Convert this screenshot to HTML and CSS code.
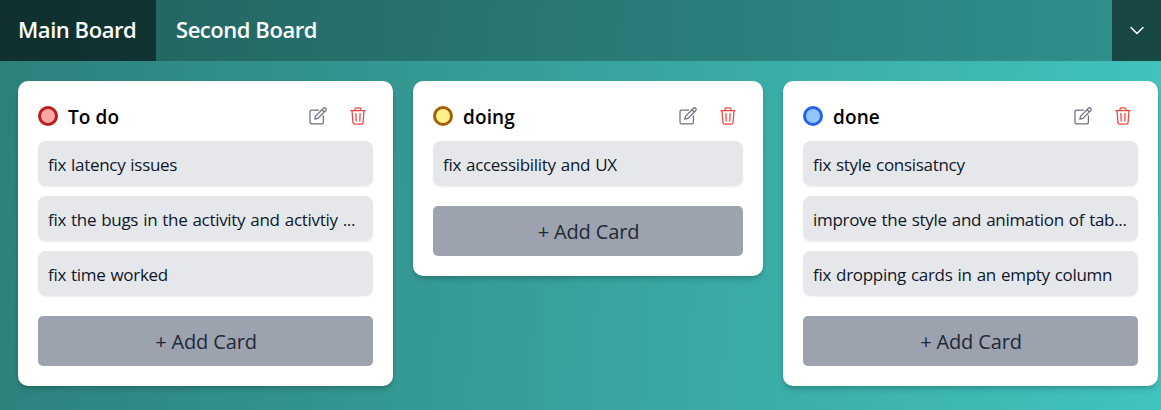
FILE: index.html
```html
<!DOCTYPE html>
<html lang="en">
<head>
<meta charset="utf-8">
<title>Boards</title>
<link rel="stylesheet" href="styles.css">
</head>
<body>
<svg class="defs" aria-hidden="true">
  <symbol id="edit" viewBox="0 0 20 20">
    <path d="M10.500 4H3.600Q2 4 2 5.600V16.200Q2 17.800 3.600 17.800H13.800Q15.400 17.800 15.400 16.200V9.800"/>
    <path d="M6.800 13.200L7.600 10.100L15.500 2.200Q16.600 1.200 17.700 2.300Q18.800 3.400 17.800 4.500L9.900 12.400Z M14 3.700L16.300 6"/>
  </symbol>
  <symbol id="trash" viewBox="0 0 20 20">
    <path d="M2.800 4.500H17.200M4 4.500L4.900 16.400Q5 18.200 6.800 18.200H13.200Q15 18.200 15.100 16.400L16 4.500M7 4.500V3.400Q7 1.800 8.600 1.800H11.400Q13 1.800 13 3.400V4.500M7.900 7.500L8.200 15M12.100 7.500L11.800 15"/>
  </symbol>
</svg>
<nav class="tabs">
  <button class="tab tab-active">Main Board</button>
  <button class="tab tab-second">Second Board</button>
  <button class="menu" aria-label="Menu"><svg viewBox="0 0 16 16"><path d="M2 4.500L8 10.500L14 4.500"/></svg></button>
</nav>
<main class="board">
  <section class="column wide">
    <header class="head"><span class="dot red"></span><h2>To do</h2><svg class="icon edit"><use href="#edit"/></svg><svg class="icon trash"><use href="#trash"/></svg></header>
    <ul class="cards"><li>fix latency issues</li><li>fix the bugs in the activity and activtiy ...</li><li>fix time worked</li></ul>
    <button class="add">+ Add Card</button>
  </section>
  <section class="column">
    <header class="head"><span class="dot yellow"></span><h2>doing</h2><svg class="icon edit"><use href="#edit"/></svg><svg class="icon trash"><use href="#trash"/></svg></header>
    <ul class="cards"><li>fix accessibility and UX</li></ul>
    <button class="add">+ Add Card</button>
  </section>
  <section class="column wide">
    <header class="head"><span class="dot blue"></span><h2>done</h2><svg class="icon edit"><use href="#edit"/></svg><svg class="icon trash"><use href="#trash"/></svg></header>
    <ul class="cards"><li>fix style consisatncy</li><li>improve the style and animation of tab...</li><li>fix dropping cards in an empty column</li></ul>
    <button class="add">+ Add Card</button>
  </section>
</main>
</body>
</html>
```
FILE: styles.css
```css
* { box-sizing: border-box; }
body { margin: 0; height: 410px; overflow: hidden; font-family: "Open Sans", sans-serif; background: linear-gradient(93deg, #2d817b 0%, #41c3be 100%); }
button { border: 0; padding: 0; margin: 0; font: inherit; color: inherit; background: none; }
.defs { display: none; }
.tabs { display: flex; height: 61px; background: rgba(0,0,0,.25); color: #fff; font-size: 22px; font-weight: 600; }
.tab { white-space: nowrap; text-align: left; padding: 0 0 3px 18px; width: 156px; letter-spacing: -.45px; }
.tab-active { background: rgba(0,0,0,.5); }
.tab-second { width: 182px; padding-left: 20px; }
.menu { margin-left: auto; width: 49px; display: grid; place-items: center; background: rgba(0,0,0,.5); }
.menu svg { width: 16px; height: 16px; fill: none; stroke: #fff; stroke-width: 1.5; stroke-linecap: round; stroke-linejoin: round; }
.board { display: flex; align-items: flex-start; gap: 20px; padding: 20px 18px; }
.column { flex: none; width: 350px; padding: 20px; background: #fff; border-radius: 10px; box-shadow: 0 4px 6px -1px rgba(0,0,0,.16), 0 2px 4px -2px rgba(0,0,0,.16); }
.wide { width: 375px; }
.head { display: flex; align-items: center; height: 30px; margin-bottom: 10px; }
.dot { width: 20px; height: 20px; border: 3px solid; border-radius: 50%; }
.red { border-color: #b91c1c; background: #fca5a5; }
.yellow { border-color: #a16207; background: #fef08a; }
.blue { border-color: #2563eb; background: #93c5fd; }
h2 { margin: 0 auto 0 10px; padding-top: 2px; font-size: 19px; line-height: 28px; font-weight: 600; letter-spacing: .1px; }
.icon { width: 20px; height: 20px; fill: none; stroke-width: 1.25; stroke-linecap: round; stroke-linejoin: round; }
.edit { stroke: #6b7280; margin-right: 20px; }
.trash { stroke: #ef4444; margin-right: 5px; }
.cards { list-style: none; margin: 0; padding: 0; display: grid; gap: 10px; }
.cards li { height: 45px; padding: 1px 10px 0; display: flex; align-items: center; border-radius: 8px; background: #e5e7eb; box-shadow: 0 1px 2px rgba(0,0,0,.07); color: #0f172a; font-size: 17px; white-space: nowrap; letter-spacing: -.3px; word-spacing: .9px; }
.add { display: block; width: 100%; height: 50px; margin-top: 20px; padding: 1px 0 0 1px; border-radius: 5px; background: #9ca3af; color: #1f2937; font-size: 20px; letter-spacing: -.15px; }
```
